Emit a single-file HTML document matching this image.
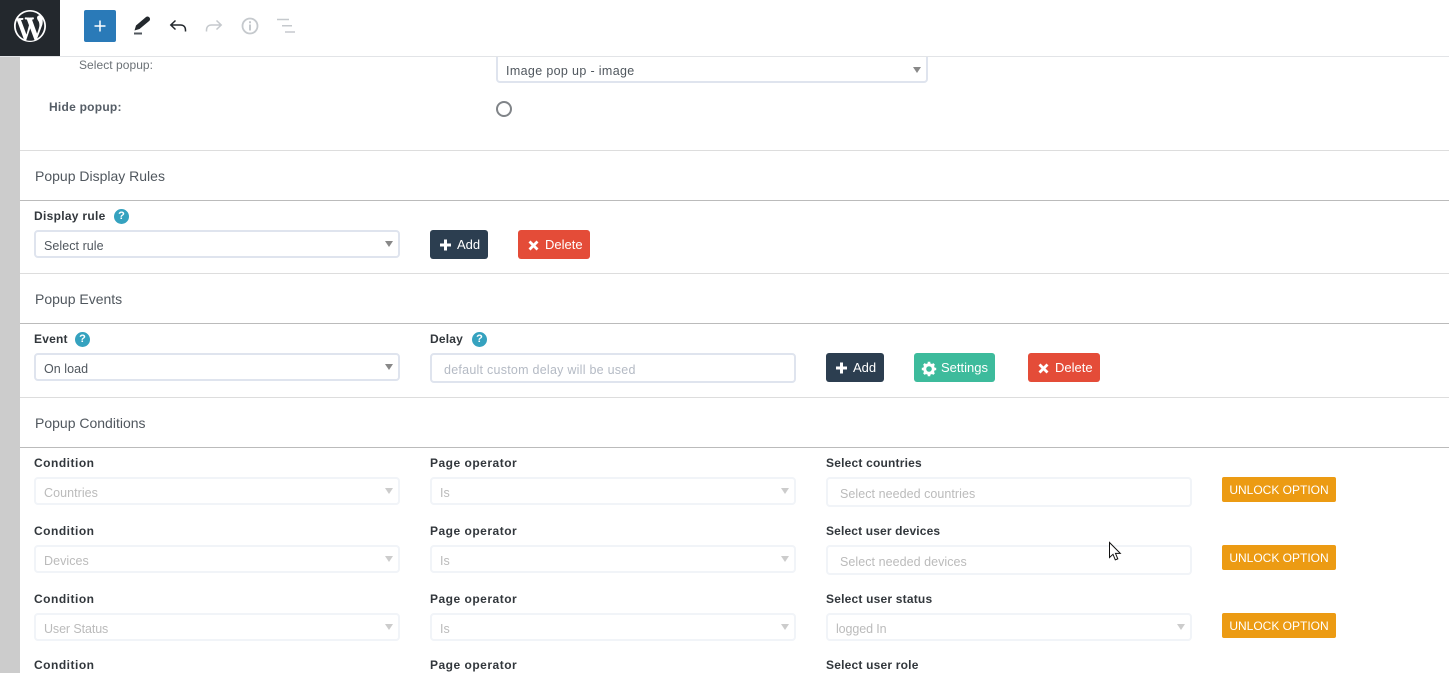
<!DOCTYPE html>
<html><head><meta charset="utf-8"><style>
html,body{margin:0;padding:0;background:#fff}
#p{position:relative;width:1449px;height:673px;overflow:hidden;background:#fff;font-family:"Liberation Sans",sans-serif}
.t{position:absolute;white-space:nowrap;line-height:16px;font-size:12.5px}
.h{color:#50575e;font-size:14px}
.b{color:#32373c;font-weight:bold;font-size:12px;letter-spacing:.2px}
.c{letter-spacing:.5px}
.r{position:absolute;height:1px;left:20px;right:0}
.f{position:absolute;box-sizing:border-box;background:#fff;border:2px solid #dfe4ee;border-radius:4px;width:366px}
.d{border-color:#f1f4f8}
.f i{position:absolute;right:5px;top:9px;width:0;height:0;border:4.5px solid transparent;border-top:6px solid #888;border-bottom:0}
.d i{border-top-color:#ccc}
.f span{position:absolute;left:8px;top:6px;white-space:nowrap;line-height:16px;font-size:12.5px;letter-spacing:.05px;color:#50575e}
.d span{color:#bbb}
.in span{left:12px;top:7px;color:#b4bac4}
.d.in span{color:#bbb}
.btn{position:absolute;box-sizing:border-box;height:29px;border-radius:3px;color:#fff;font-size:13px;line-height:30px;white-space:nowrap}
.btn svg{position:absolute;top:7px}
.btn span{position:absolute;top:0}
.dk{background:#2c3e50}.rd{background:#e44c38}.gr{background:#3dbb9c}
.un{position:absolute;left:1222px;width:114px;height:25px;background:#ec9b13;border-radius:2px;color:#fff;font-size:12px;line-height:27px;text-align:center;white-space:nowrap}
.q{position:absolute;width:15px;height:15px;border-radius:50%;background:#35a2bf;color:#fff;font-size:11px;font-weight:bold;line-height:15px;text-align:center}
</style></head><body><div id="p">
<!-- left strip -->
<div style="position:absolute;left:0;top:57px;width:20px;height:616px;background:#ccc"></div>

<!-- top select sits under the toolbar -->
<div class="f" style="left:496px;top:50px;width:432px;height:33px"><span style="top:11px;letter-spacing:.35px">Image pop up - image</span><i style="top:15px"></i></div>

<!-- toolbar -->
<div style="position:absolute;left:0;top:0;width:1449px;height:56px;background:#fff"></div>
<div style="position:absolute;left:0;top:56px;width:1449px;height:1px;background:#e2e4e7"></div>
<div style="position:absolute;left:0;top:0;width:60px;height:56px;background:#23282d"></div>
<svg style="position:absolute;left:14px;top:10px" width="32" height="32" viewBox="0 0 20 20"><path fill="#fff" d="M20 10c0-5.520-4.480-10-10-10S0 4.480 0 10s4.480 10 10 10 10-4.480 10-10zM7.780 15.370L4.370 6.220c.55-.02 1.170-.08 1.170-.08.500-.06.440-1.130-.060-1.110 0 0-1.450.110-2.370.110-.18 0-.37 0-.58-.010C4.120 2.690 6.890 1.030 10 1.030c2.330 0 4.450.89 6.030 2.360-.67-.110-1.620.39-1.620 1.550 0 .72.430 1.330.89 2.050.36.640.57 1.420.57 2.560 0 1.550-1.460 5.200-1.460 5.200l-3.160-8.720c.56-.02.86-.17.86-.17.500-.05.440-1.250-.060-1.220 0 0-1.500.120-2.480.120-.91 0-2.440-.12-2.440-.12-.5-.03-.56 1.200-.06 1.220l.97.090 1.330 3.600zM17.410 10c.24-.64.740-1.870.430-4.250.7 1.290 1.050 2.710 1.050 4.250 0 3.290-1.730 6.240-4.400 7.780.97-2.590 1.940-5.200 2.920-7.780zM6.100 18.090C3.120 16.650 1.110 13.530 1.110 10c0-1.300.23-2.480.72-3.590l4.270 11.680zm4.030-6.630l2.690 7.290c-.87.320-1.770.490-2.760.490-.83 0-1.650-.13-2.430-.36z"/></svg>

<div style="position:absolute;left:84px;top:10px;width:32px;height:32px;background:#2a7ab8;border-radius:2px"></div>
<svg style="position:absolute;left:84px;top:10px" width="32" height="32"><path d="M16 10.500v11M10.500 16h11" stroke="#fff" stroke-width="1.500"/></svg>

<svg style="position:absolute;left:130px;top:12px" width="24" height="26"><path fill="#23282d" d="M4.500 18.500L6 13.500 16 5c1.500-.9 2.800-.4 3.700.9.600 1 .4 2-.4 3L9.500 17z"/><rect x="4" y="20.500" width="8" height="2" fill="#50575e"/></svg>

<svg style="position:absolute;left:168px;top:16px" width="20" height="20" fill="none" stroke="#23282d" stroke-width="1.500"><path d="M7.500 4.500L2.800 9l4.700 4.500M3 9h9.500c3 0 5 1.800 5 5v1.500"/></svg>
<svg style="position:absolute;left:204px;top:16px" width="20" height="20" fill="none" stroke="#c5c9cd" stroke-width="1.500"><path d="M12.500 4.500L17.200 9l-4.700 4.500M17 9H7.500c-3 0-5 1.800-5 5v1.500"/></svg>
<svg style="position:absolute;left:240px;top:16px" width="20" height="20" fill="none" stroke="#c5c9cd" stroke-width="1.800"><circle cx="10" cy="10" r="7.500"/><path d="M10 8.500v6M10 5.200v2" stroke-width="2"/></svg>
<svg style="position:absolute;left:276px;top:18px" width="20" height="16" stroke="#c5c9cd" stroke-width="1.500"><path d="M1 1.500h12M6 7.800h10M9 14h10"/></svg>

<!-- top section -->
<div class="t" style="left:79px;top:57px;color:#6b7176;font-size:12px;letter-spacing:.05px">Select popup:</div>
<div class="t" style="left:49px;top:99px;color:#555d66;font-weight:bold;font-size:12px;letter-spacing:.25px">Hide popup:</div>
<div style="position:absolute;left:496px;top:101px;width:16px;height:16px;box-sizing:border-box;border:2px solid #808488;border-radius:50%"></div>

<div class="r" style="top:150px;background:#ddd"></div>
<div class="t h" style="left:35px;top:168px">Popup Display Rules</div>
<div class="r" style="top:200px;background:#bbb"></div>

<!-- display rule -->
<div class="t b" style="left:34px;top:208px;letter-spacing:.3px">Display rule</div>
<div class="q" style="left:114px;top:209px">?</div>
<div class="f" style="left:34px;top:230px;height:28px"><span>Select rule</span><i></i></div>
<div class="btn dk" style="left:430px;top:230px;width:58px"><svg style="left:9px;top:8px" width="13" height="15" viewBox="0 0 13 15"><path d="M6.500 1.500v11M1 7h11" stroke="#fff" stroke-width="3"/></svg><span style="left:27px">Add</span></div>
<div class="btn rd" style="left:518px;top:230px;width:72px"><svg style="left:9px;top:8px" width="13" height="15" viewBox="0 0 13 15"><path d="M2.500 3.500l8 8M10.500 3.500l-8 8" stroke="#fff" stroke-width="2.800"/></svg><span style="left:27px">Delete</span></div>
<div class="r" style="top:273px;background:#ddd"></div>

<!-- events -->
<div class="t h" style="left:35px;top:291px">Popup Events</div>
<div class="r" style="top:323px;background:#bbb"></div>
<div class="t b" style="left:34px;top:331px">Event</div>
<div class="q" style="left:75px;top:332px">?</div>
<div class="t b" style="left:430px;top:331px">Delay</div>
<div class="q" style="left:472px;top:332px">?</div>
<div class="f" style="left:34px;top:353px;height:28px"><span>On load</span><i></i></div>
<div class="f in" style="left:430px;top:353px;height:30px"><span style="letter-spacing:.25px">default custom delay will be used</span></div>
<div class="btn dk" style="left:826px;top:353px;width:58px"><svg style="left:9px;top:8px" width="13" height="15" viewBox="0 0 13 15"><path d="M6.500 1.500v11M1 7h11" stroke="#fff" stroke-width="3"/></svg><span style="left:27px">Add</span></div>
<div class="btn gr" style="left:914px;top:353px;width:81px"><svg style="left:7px;top:8px" width="16" height="16" viewBox="0 0 16 16"><circle cx="8" cy="8" r="4.300" fill="none" stroke="#fff" stroke-width="3"/><path d="M8 .8v14.400M.8 8h14.400M2.900 2.900l10.200 10.200M13.100 2.900L2.900 13.100" stroke="#fff" stroke-width="2.600" stroke-dasharray="3 8.400"/></svg><span style="left:27px">Settings</span></div>
<div class="btn rd" style="left:1028px;top:353px;width:72px"><svg style="left:9px;top:8px" width="13" height="15" viewBox="0 0 13 15"><path d="M2.500 3.500l8 8M10.500 3.500l-8 8" stroke="#fff" stroke-width="2.800"/></svg><span style="left:27px">Delete</span></div>
<div class="r" style="top:397px;background:#ddd"></div>

<!-- conditions -->
<div class="t h" style="left:35px;top:415px">Popup Conditions</div>
<div class="r" style="top:447px;background:#bbb"></div>

<div class="t b c" style="left:34px;top:455px">Condition</div>
<div class="t b c" style="left:430px;top:455px">Page operator</div>
<div class="t b" style="left:826px;top:455px">Select countries</div>
<div class="f d" style="left:34px;top:477px;height:28px"><span>Countries</span><i></i></div>
<div class="f d" style="left:430px;top:477px;height:28px"><span>Is</span><i></i></div>
<div class="f d in" style="left:826px;top:477px;height:30px"><span>Select needed countries</span></div>
<div class="un" style="top:477px">UNLOCK OPTION</div>

<div class="t b c" style="left:34px;top:523px">Condition</div>
<div class="t b c" style="left:430px;top:523px">Page operator</div>
<div class="t b" style="left:826px;top:523px;letter-spacing:.15px">Select user devices</div>
<div class="f d" style="left:34px;top:545px;height:28px"><span>Devices</span><i></i></div>
<div class="f d" style="left:430px;top:545px;height:28px"><span>Is</span><i></i></div>
<div class="f d in" style="left:826px;top:545px;height:30px"><span>Select needed devices</span></div>
<div class="un" style="top:545px">UNLOCK OPTION</div>

<div class="t b c" style="left:34px;top:591px">Condition</div>
<div class="t b c" style="left:430px;top:591px">Page operator</div>
<div class="t b" style="left:826px;top:591px">Select user status</div>
<div class="f d" style="left:34px;top:613px;height:28px"><span style="letter-spacing:-.1px">User Status</span><i></i></div>
<div class="f d" style="left:430px;top:613px;height:28px"><span>Is</span><i></i></div>
<div class="f d" style="left:826px;top:613px;height:28px"><span style="letter-spacing:-.1px">logged In</span><i></i></div>
<div class="un" style="top:613px">UNLOCK OPTION</div>

<div class="t b c" style="left:34px;top:657px">Condition</div>
<div class="t b c" style="left:430px;top:657px">Page operator</div>
<div class="t b" style="left:826px;top:657px">Select user role</div>

<!-- cursor -->
<svg style="position:absolute;left:1108px;top:541px" width="14" height="21" viewBox="0 0 14 21"><path d="M1.500 1.500v15l3.500-3.200 2.300 5.600 2.500-1-2.300-5.500h4.800z" fill="#fff" stroke="#111" stroke-width="1"/></svg>
</div></body></html>
